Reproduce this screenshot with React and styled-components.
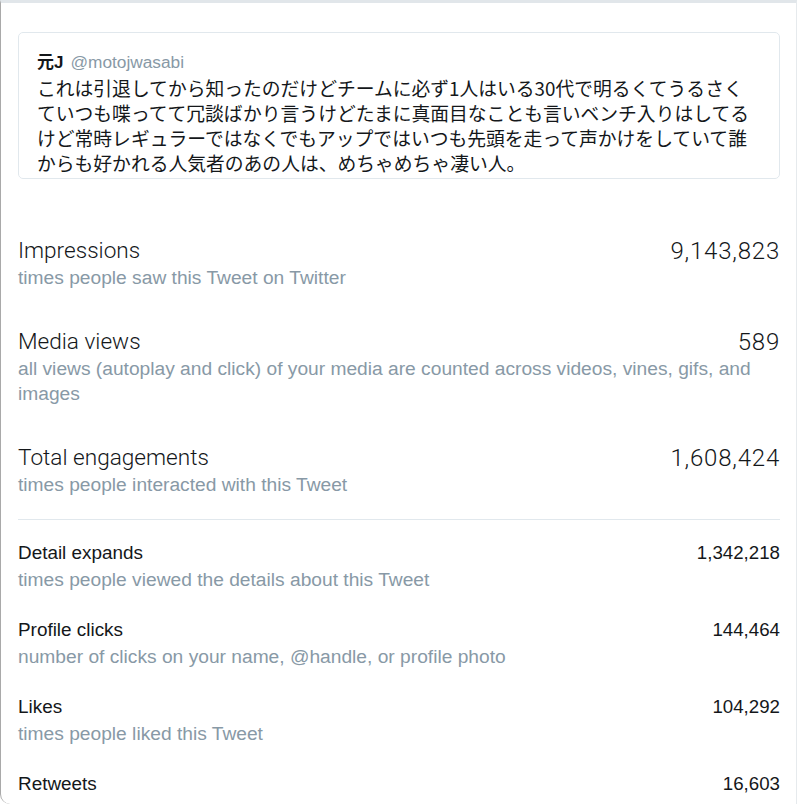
import styled, {createGlobalStyle} from 'styled-components';

const GlobalStyle = createGlobalStyle`
  html, body {
    margin: 0;
    padding: 0;
    background: #ffffff;
  }
  body {
    font-family: "Liberation Sans", "Noto Sans CJK JP", sans-serif;
    color: #14171a;
  }
`;

const Frame = styled.div`
  box-sizing: border-box;
  width: 797px;
  height: 804px;
  overflow: hidden;
  border-top: 3px solid #e1e6ea;
  border-left: 1px solid #a9a9a9;
  border-right: 1px solid #e6eaed;
  border-bottom-left-radius: 10px;
  padding: 29px 16px 0 17px;
`;

const TweetCard = styled.div`
  border: 1px solid #e1e8ed;
  border-radius: 5px;
  padding: 18px 10px 3px 18px;
`;

const Author = styled.div`
  display: flex;
  align-items: baseline;
  line-height: 22px;
`;

const Name = styled.span`
  font-weight: 700;
  font-size: 17px;
  color: #14171a;
`;

const Handle = styled.span`
  font-size: 17.3px;
  color: #8899a6;
  margin-left: 7px;
`;

const TweetText = styled.p`
  margin: 1px 0 0;
  font-family: "Noto Sans CJK JP", sans-serif;
  font-size: 18.8px;
  line-height: 25px;
  color: #14171a;
`;

const TweetLine = styled.span`
  display: block;
  white-space: nowrap;
`;

const Metrics = styled.div`
  display: flex;
  flex-direction: column;
  gap: ${props => props.$gap}px;
  margin-top: ${props => props.$top || 0}px;
`;

const Row = styled.div`
  display: grid;
  grid-template-columns: 1fr auto;
`;

const Title = styled.div`
  font-family: ${props => props.$big ? '"Roboto", "Liberation Sans", sans-serif' : '"Liberation Sans", sans-serif'};
  font-weight: ${props => props.$big ? 300 : 400};
  font-size: ${props => props.$big ? '22.6px' : '18.9px'};
  line-height: 28px;
  color: #14171a;
`;

const Value = styled(Title)`
  text-align: right;
  font-size: ${props => props.$big ? '24px' : '18.7px'};
  letter-spacing: ${props => props.$big ? '0.8px' : '0'};
`;

const Description = styled.div`
  grid-column: 1 / -1;
  font-size: 19.2px;
  line-height: ${props => props.$big ? 25 : 26}px;
  color: #8899a6;
`;

const Divider = styled.hr`
  border: 0;
  border-top: 1px solid #e1e8ed;
  margin: 22px 0 19px;
  height: 0;
`;

const tweetLines = [
  'これは引退してから知ったのだけどチームに必ず1人はいる30代で明るくてうるさく',
  'ていつも喋ってて冗談ばかり言うけどたまに真面目なことも言いベンチ入りはしてる',
  'けど常時レギュラーではなくでもアップではいつも先頭を走って声かけをしていて誰',
  'からも好かれる人気者のあの人は、めちゃめちゃ凄い人。',
];

const mainMetrics = [
  {title: 'Impressions', value: '9,143,823', desc: 'times people saw this Tweet on Twitter'},
  {title: 'Media views', value: '589', desc: 'all views (autoplay and click) of your media are counted across videos, vines, gifs, and images'},
  {title: 'Total engagements', value: '1,608,424', desc: 'times people interacted with this Tweet'},
];

const detailMetrics = [
  {title: 'Detail expands', value: '1,342,218', desc: 'times people viewed the details about this Tweet'},
  {title: 'Profile clicks', value: '144,464', desc: 'number of clicks on your name, @handle, or profile photo'},
  {title: 'Likes', value: '104,292', desc: 'times people liked this Tweet'},
  {title: 'Retweets', value: '16,603', desc: 'times people retweeted this Tweet'},
];

function MetricRow({metric, big}) {
  return (
    <Row>
      <Title $big={big}>{metric.title}</Title>
      <Value $big={big}>{metric.value}</Value>
      <Description $big={big}>{metric.desc}</Description>
    </Row>
  );
}

function App() {
  return (
    <>
      <GlobalStyle />
      <Frame>
        <TweetCard>
          <Author>
            <Name>元J</Name>
            <Handle>@motojwasabi</Handle>
          </Author>
          <TweetText>
            {tweetLines.map(line => <TweetLine key={line}>{line}</TweetLine>)}
          </TweetText>
        </TweetCard>
        <Metrics $gap={38} $top={58}>
          {mainMetrics.map(m => <MetricRow key={m.title} metric={m} big />)}
        </Metrics>
        <Divider />
        <Metrics $gap={23}>
          {detailMetrics.map(m => <MetricRow key={m.title} metric={m} />)}
        </Metrics>
      </Frame>
    </>
  );
}

export default App;
